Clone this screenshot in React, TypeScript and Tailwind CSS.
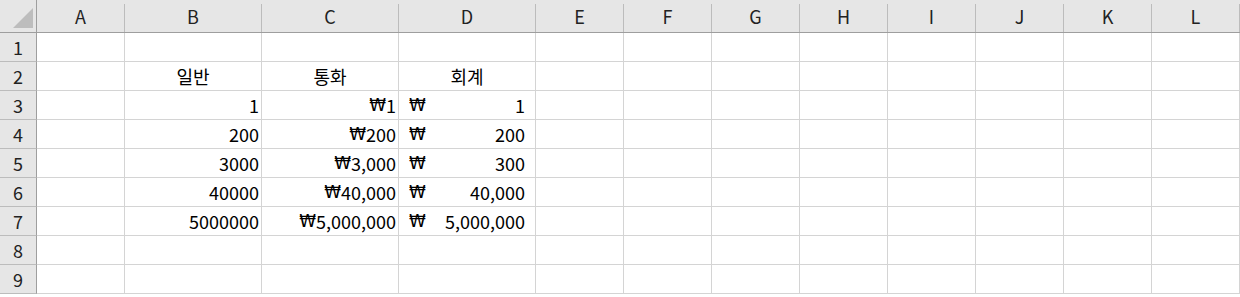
const cols = [
  { name: "A", w: "w-[87px]", dw: "w-[88px]" },
  { name: "B", w: "w-[136px]", dw: "w-[137px]" },
  { name: "C", w: "w-[136px]", dw: "w-[137px]" },
  { name: "D", w: "w-[136px]", dw: "w-[137px]" },
  { name: "E", w: "w-[87px]", dw: "w-[88px]" },
  { name: "F", w: "w-[87px]", dw: "w-[88px]" },
  { name: "G", w: "w-[87px]", dw: "w-[88px]" },
  { name: "H", w: "w-[87px]", dw: "w-[88px]" },
  { name: "I", w: "w-[87px]", dw: "w-[88px]" },
  { name: "J", w: "w-[87px]", dw: "w-[88px]" },
  { name: "K", w: "w-[87px]", dw: "w-[88px]" },
  { name: "L", w: "w-[87px]", dw: "w-[88px]" },
];

type Cell = { text?: string; won?: boolean; align?: "right" | "center"; acct?: boolean };

const data: Record<number, Record<string, Cell>> = {
  2: {
    B: { text: "일반", align: "center" },
    C: { text: "통화", align: "center" },
    D: { text: "회계", align: "center" },
  },
  3: { B: { text: "1" }, C: { text: "1", won: true }, D: { text: "1", acct: true } },
  4: { B: { text: "200" }, C: { text: "200", won: true }, D: { text: "200", acct: true } },
  5: { B: { text: "3000" }, C: { text: "3,000", won: true }, D: { text: "300", acct: true } },
  6: { B: { text: "40000" }, C: { text: "40,000", won: true }, D: { text: "40,000", acct: true } },
  7: { B: { text: "5000000" }, C: { text: "5,000,000", won: true }, D: { text: "5,000,000", acct: true } },
};

const font = { fontFamily: '"Noto Sans CJK KR", "Noto Sans", sans-serif' };
const wonFont = { fontFamily: '"DejaVu Sans", "Noto Sans CJK KR", sans-serif' };

const Won = () => (
  <span className="text-[17px]" style={wonFont}>
    ₩
  </span>
);

function DataCell({ w, cell }: { w: string; cell?: Cell }) {
  if (cell?.acct) {
    return (
      <div className={`${w} shrink-0 h-full flex justify-between items-center pl-[10px] pr-[10px] border-r border-[#d4d4d4] leading-[28px]`}>
        <Won />
        <span>{cell.text}</span>
      </div>
    );
  }
  const align = cell?.align === "center" ? "justify-center" : "justify-end pr-[2px]";
  return (
    <div className={`${w} shrink-0 h-full flex items-center ${align} border-r border-[#d4d4d4] leading-[28px] whitespace-nowrap`}>
      {cell?.won && <Won />}
      {cell?.text}
    </div>
  );
}

export default function App() {
  const rows = [1, 2, 3, 4, 5, 6, 7, 8, 9];
  return (
    <div className="w-[1240px] h-[297px] bg-white overflow-hidden text-[18px] text-black" style={font}>
      {/* column header */}
      <div className="flex h-[33px] bg-[#e6e6e6] border-b border-[#9e9e9e]">
        <div className="w-[36px] shrink-0 h-full flex items-end justify-end pr-[3px] pb-[4px]">
          <svg width="20" height="20" viewBox="0 0 20 20">
            <polygon points="0,20 20,20 20,0" fill="#bdbdbd" />
          </svg>
        </div>
        <div className="w-px shrink-0 h-full bg-[#9e9e9e]" />
        {cols.map((c) => (
          <div key={c.name} className="flex shrink-0 items-end h-full">
            <div className={`${c.w} h-full flex items-center justify-center leading-[32px] text-[#222]`}>{c.name}</div>
            <div className="w-px h-[28px] bg-[#bcbcbc]" />
          </div>
        ))}
      </div>
      {rows.map((r) => (
        <div key={r} className="flex h-[29px] border-b border-[#d4d4d4]">
          <div className="w-[37px] shrink-0 h-[29px] -mb-px flex items-center justify-center bg-[#e6e6e6] border-r border-b border-r-[#9e9e9e] border-b-[#bcbcbc] leading-[28px] text-[#222]">
            {r}
          </div>
          {cols.map((c) => (
            <DataCell key={c.name} w={c.dw} cell={data[r]?.[c.name]} />
          ))}
        </div>
      ))}
    </div>
  );
}
